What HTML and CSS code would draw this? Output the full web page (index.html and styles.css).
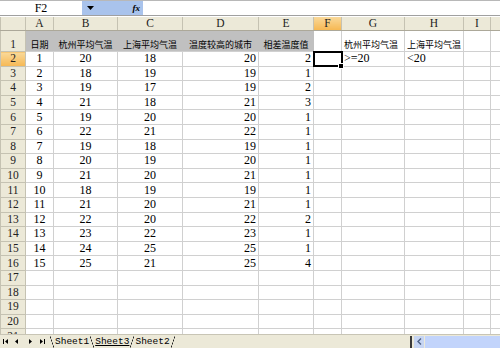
FILE: index.html
```html
<!DOCTYPE html>
<html>
<head>
<meta charset="utf-8">
<link rel="stylesheet" href="styles.css">
</head>
<body>
<div class="app">
  <div class="fbar">
    <div class="namebox">F2</div>
    <div class="fbtns">
      <svg class="drop" width="7" height="4" viewBox="0 0 7 4"><path d="M0 0H7L3.5 4Z" fill="#000"/></svg>
      <span class="fx">fx</span>
    </div>
    <div class="finput"></div>
  </div>
  <div class="sheet">
    <table class="grid">
      <colgroup>
        <col class="w-rh"><col class="w-a"><col class="w-b"><col class="w-c"><col class="w-d"><col class="w-e"><col class="w-f"><col class="w-g"><col class="w-h"><col class="w-i"><col class="w-j">
      </colgroup>
      <thead>
        <tr class="hdr">
          <th class="corner"></th><th>A</th><th>B</th><th>C</th><th>D</th><th>E</th><th class="sel">F</th><th>G</th><th>H</th><th>I</th><th></th>
        </tr>
      </thead>
      <tbody>
        <tr class="r1">
          <th>1</th>
          <td class="gr cjk c">日期</td><td class="gr cjk c">杭州平均气温</td><td class="gr cjk c">上海平均气温</td><td class="gr cjk c">温度较高的城市</td><td class="gr cjk c">相差温度值</td>
          <td></td><td class="cjk">杭州平均气温</td><td class="cjk">上海平均气温</td><td></td><td></td>
        </tr>
        <tr><th class="sel">2</th><td class="c">1</td><td class="c">20</td><td class="c">18</td><td class="r">20</td><td class="r">2</td><td class="active"></td><td>&gt;=20</td><td>&lt;20</td><td></td><td></td></tr>
        <tr><th>3</th><td class="c">2</td><td class="c">18</td><td class="c">19</td><td class="r">19</td><td class="r">1</td><td></td><td></td><td></td><td></td><td></td></tr>
        <tr><th>4</th><td class="c">3</td><td class="c">19</td><td class="c">17</td><td class="r">19</td><td class="r">2</td><td></td><td></td><td></td><td></td><td></td></tr>
        <tr><th>5</th><td class="c">4</td><td class="c">21</td><td class="c">18</td><td class="r">21</td><td class="r">3</td><td></td><td></td><td></td><td></td><td></td></tr>
        <tr><th>6</th><td class="c">5</td><td class="c">19</td><td class="c">20</td><td class="r">20</td><td class="r">1</td><td></td><td></td><td></td><td></td><td></td></tr>
        <tr><th>7</th><td class="c">6</td><td class="c">22</td><td class="c">21</td><td class="r">22</td><td class="r">1</td><td></td><td></td><td></td><td></td><td></td></tr>
        <tr><th>8</th><td class="c">7</td><td class="c">19</td><td class="c">18</td><td class="r">19</td><td class="r">1</td><td></td><td></td><td></td><td></td><td></td></tr>
        <tr><th>9</th><td class="c">8</td><td class="c">20</td><td class="c">19</td><td class="r">20</td><td class="r">1</td><td></td><td></td><td></td><td></td><td></td></tr>
        <tr><th>10</th><td class="c">9</td><td class="c">21</td><td class="c">20</td><td class="r">21</td><td class="r">1</td><td></td><td></td><td></td><td></td><td></td></tr>
        <tr><th>11</th><td class="c">10</td><td class="c">18</td><td class="c">19</td><td class="r">19</td><td class="r">1</td><td></td><td></td><td></td><td></td><td></td></tr>
        <tr><th>12</th><td class="c">11</td><td class="c">21</td><td class="c">20</td><td class="r">21</td><td class="r">1</td><td></td><td></td><td></td><td></td><td></td></tr>
        <tr><th>13</th><td class="c">12</td><td class="c">22</td><td class="c">20</td><td class="r">22</td><td class="r">2</td><td></td><td></td><td></td><td></td><td></td></tr>
        <tr><th>14</th><td class="c">13</td><td class="c">23</td><td class="c">22</td><td class="r">23</td><td class="r">1</td><td></td><td></td><td></td><td></td><td></td></tr>
        <tr><th>15</th><td class="c">14</td><td class="c">24</td><td class="c">25</td><td class="r">25</td><td class="r">1</td><td></td><td></td><td></td><td></td><td></td></tr>
        <tr><th>16</th><td class="c">15</td><td class="c">25</td><td class="c">21</td><td class="r">25</td><td class="r">4</td><td></td><td></td><td></td><td></td><td></td></tr>
        <tr><th>17</th><td></td><td></td><td></td><td></td><td></td><td></td><td></td><td></td><td></td><td></td></tr>
        <tr><th>18</th><td></td><td></td><td></td><td></td><td></td><td></td><td></td><td></td><td></td><td></td></tr>
        <tr><th>19</th><td></td><td></td><td></td><td></td><td></td><td></td><td></td><td></td><td></td><td></td></tr>
        <tr><th>20</th><td></td><td></td><td></td><td></td><td></td><td></td><td></td><td></td><td></td><td></td></tr>
        <tr><th>21</th><td></td><td></td><td></td><td></td><td></td><td></td><td></td><td></td><td></td><td></td></tr>
      </tbody>
    </table>
  </div>
  <div class="tabbar">
    <div class="nav">
      <svg width="48" height="9" viewBox="0 0 48 9">
        <rect x="3" y="2" width="1" height="5" fill="#000"/><path d="M8 2V7L5 4.5Z" fill="#000"/>
        <path d="M18 2V7L15 4.5Z" fill="#000"/>
        <path d="M29 2V7L32 4.5Z" fill="#000"/>
        <path d="M40 2V7L43 4.5Z" fill="#000"/><rect x="44" y="2" width="1" height="5" fill="#000"/>
      </svg>
    </div>
    <div class="tabs">
      <span class="edge bs"></span><span class="tab">Sheet1</span><span class="edge bs"></span><span class="tab act">Sheet3</span><span class="edge fs"></span><span class="tab">Sheet2</span><span class="edge fs"></span>
    </div>
    <div class="split"></div>
    <div class="hscroll">
      <div class="sbtn">
        <svg width="5" height="7" viewBox="0 0 5 7"><path d="M4 0.5L1 3.5L4 6.5" fill="none" stroke="#4d6185" stroke-width="1.4"/></svg>
      </div>
      <div class="strack"></div>
    </div>
  </div>
</div>
</body>
</html>
```

FILE: styles.css
```css
html, body {
  margin: 0;
  padding: 0;
  background: #fff;
}
.app {
  width: 500px;
  height: 348px;
  overflow: hidden;
  display: flex;
  flex-direction: column;
  font-family: "Liberation Serif", "Noto Sans CJK SC", serif;
  color: #000;
}
.fbar {
  display: flex;
  height: 14px;
  border-top: 1px solid #b8b8b8;
  border-bottom: 1px solid #a0a0a0;
  flex: none;
}
.namebox {
  width: 82px;
  font-size: 12px;
  line-height: 14px;
  text-align: center;
}
.fbtns {
  width: 61px;
  background: #a9c3ec;
  display: flex;
  align-items: center;
  justify-content: space-between;
  padding: 0 3px 0 5px;
  box-sizing: border-box;
}
.fx {
  font-size: 9px;
  font-style: italic;
  font-weight: bold;
  line-height: 14px;
}
.finput {
  flex: 1;
}
.sheet {
  margin-top: 1px;
  height: 317px;
  overflow: hidden;
  flex: none;
}
.grid {
  table-layout: fixed;
  border-collapse: collapse;
  width: 500px;
  font-size: 12px;
}
.w-rh { width: 25px; }
.w-a { width: 28px; }
.w-b { width: 64px; }
.w-c { width: 65px; }
.w-d { width: 76px; }
.w-e { width: 55px; }
.w-f { width: 28px; }
.w-g { width: 63px; }
.w-h { width: 59px; }
.w-i { width: 27px; }
.w-j { width: 12px; }
.grid th, .grid td {
  padding: 0 2px;
  white-space: nowrap;
  overflow: hidden;
  line-height: 13px;
}
.grid td {
  border: 1px solid #d0d0d0;
  text-align: left;
}
.grid th {
  background: #ece9d8;
  border: 1px solid #c5c2b2;
  font-weight: normal;
  text-align: center;
  font-size: 11.5px;
  color: #222;
}
.hdr th {
  height: 12px;
  border-top: none;
  border-bottom-color: #aca899;
}
.grid tbody tr {
  height: 14.6px;
}
.grid tr.r1 {
  height: 21px;
}
.r1 td, .r1 th {
  vertical-align: bottom;
}
.grid th.sel {
  background: linear-gradient(#f9d99a, #f6b853);
}
.corner {
  background: #ece9d8;
}
.grid td.gr {
  background: #c0c0c0;
  border-left-color: #c0c0c0;
  border-right-color: #c0c0c0;
}
.cjk {
  font-family: "Noto Sans CJK SC", sans-serif;
  font-size: 9px;
  line-height: 13px;
}
.grid td.c { text-align: center; }
.grid td.r { text-align: right; }
.grid td.active {
  position: relative;
  outline: 2px solid #000;
  outline-offset: -1px;
  overflow: visible;
}
.grid td.active::after {
  content: "";
  position: absolute;
  right: -3px;
  bottom: -3px;
  width: 4px;
  height: 4px;
  background: #000;
  border: 1px solid #fff;
}
.tabbar {
  flex: none;
  height: 13px;
  background: #ece9d8;
  border-top: 1px solid #c8c5b5;
  border-bottom: 1px solid #fff;
  display: flex;
  align-items: center;
  font-family: "Liberation Mono", "DejaVu Sans Mono", monospace;
  font-size: 9.5px;
}
.nav {
  width: 50px;
  flex: none;
  display: flex;
}
.tabs {
  width: 360px;
  flex: none;
  display: flex;
  align-items: center;
  height: 13px;
}
.tab {
  line-height: 12px;
  padding: 0 1px;
}
.tab.act {
  text-decoration: underline;
}
.edge {
  width: 4px;
  height: 12px;
}
.edge.bs {
  background: linear-gradient(to bottom left, transparent calc(50% - 0.6px), #222 50%, transparent calc(50% + 0.6px));
}
.edge.fs {
  background: linear-gradient(to top left, transparent calc(50% - 0.6px), #222 50%, transparent calc(50% + 0.6px));
}
.split {
  width: 2px;
  flex: none;
  height: 12px;
  background: #3a3a3a;
  margin-right: 2px;
}
.hscroll {
  flex: 1;
  display: flex;
  height: 12px;
}
.sbtn {
  width: 10px;
  background: #c6d5f3;
  display: flex;
  align-items: center;
  justify-content: center;
}
.strack {
  flex: 1;
  margin-left: 1px;
  background: #c2d4fb;
}
```
